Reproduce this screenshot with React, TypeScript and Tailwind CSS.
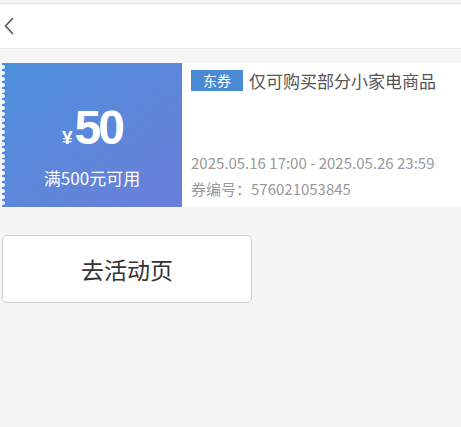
import React from 'react';

export default function App() {
  return (
    <div className="min-h-[427px] bg-[#f5f5f5]" style={{ fontFamily: '"Noto Sans CJK SC", "Liberation Sans", sans-serif' }}>
      <div className="h-[3px]" />
      <div className="h-[46px] bg-white border-y border-[#e5e5e5] flex items-center pl-[3px]">
        <svg width="12" height="18" viewBox="0 0 12 18" fill="none">
          <path d="M9.5 1.5 L2.5 9 L9.5 16.5" stroke="#555" strokeWidth="1.6" strokeLinecap="round" strokeLinejoin="round" />
        </svg>
      </div>

      <div className="mt-[14px] flex h-[144px]">
        <div className="relative ml-[2px] w-[180px] flex flex-col items-center justify-center text-white bg-gradient-to-br from-[#4b90db] to-[#6a7ed9]">
          <div className="absolute left-[-3px] top-0 bottom-0 flex flex-col justify-around py-[1px]">
            {Array.from({ length: 24 }).map((_, i) => (
              <span key={i} className="block w-[6px] h-[4px] rounded-full bg-[#f5f5f5]" />
            ))}
          </div>
          <div className="flex items-baseline mt-[20px] leading-none" style={{ fontFamily: '"Liberation Sans", sans-serif' }}>
            <span className="text-[19px] font-bold mr-[2px]">¥</span>
            <span className="text-[48px] font-bold tracking-[-3px]">50</span>
          </div>
          <div className="mt-[17px] text-[17px] leading-none">满500元可用</div>
        </div>
        <div className="flex-1 bg-white pl-[9px] pt-[7px] flex flex-col">
          <div className="flex items-center">
            <span className="bg-[#4a8ad5] text-white text-[14px] leading-[21px] px-[12px]">东券</span>
            <span className="ml-[6px] text-[17px] text-[#555] leading-[21px]">仅可购买部分小家电商品</span>
          </div>
          <div className="mt-auto pb-[5px] text-[15px] text-[#999] leading-[26px]">
            <div>2025.05.16 17:00 - 2025.05.26 23:59</div>
            <div>券编号：576021053845</div>
          </div>
        </div>
      </div>

      <button className="mt-[28px] ml-[2px] w-[250px] h-[68px] bg-white border border-[#d0d0d0] rounded-[5px] text-[23px] text-[#333] flex items-center justify-center">
        去活动页
      </button>
    </div>
  );
}
